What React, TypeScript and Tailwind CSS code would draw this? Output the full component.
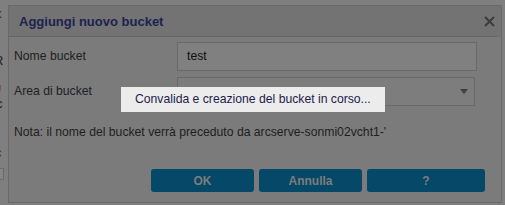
import React from 'react';

const font = { fontFamily: '"Liberation Sans", Arial, sans-serif' };

function CloseIcon() {
  return (
    <svg width="11" height="11" viewBox="0 0 11 11" className="block">
      <path d="M1 1 L10 10 M10 1 L1 10" stroke="#3c3c3c" strokeWidth="2" fill="none" />
    </svg>
  );
}

function Caret() {
  return (
    <svg width="8" height="5" viewBox="0 0 8 5" className="block">
      <path d="M0 0 H8 L4 5 Z" fill="#3f3f3f" />
    </svg>
  );
}

// partial glyphs of the page behind the overlay
function BehindStrip() {
  return (
    <div className="w-[8px] h-full overflow-hidden relative text-[13px] leading-none shrink-0">
      <div className="-ml-[5px] pt-[7px] text-[#1d2452]">x</div>
      <div className="-ml-[6px] mt-[34px] text-[#222]">R</div>
      <div className="-ml-[1px] mt-[17px] text-[9px] text-[#7a3040]">!</div>
      <div className="-ml-[4px] mt-[4px] text-[#222]">c</div>
      <div className="-ml-[4px] mt-[17px] text-[#222]">,</div>
      <div className="-ml-[5px] mt-[6px] text-[#5a2030]">c</div>
      <div className="-ml-[5px] mt-[9px] w-[9px] h-[12px] border border-[#6a6a6a] bg-[#858585]" />
    </div>
  );
}

export default function App() {
  return (
    <div className="w-[505px] h-[205px] bg-[#7f7f7f] flex overflow-hidden" style={font}>
      <BehindStrip />
      <div className="mt-[5px] w-[494px] h-[198px] border border-[#696969] bg-[#7b7b7b] relative flex flex-col">
        <div className="bg-[#737373]">
          <div className="h-[30px] flex items-center justify-between pl-[10px] pr-[6px]">
            <span className="text-[13px] leading-[16px] font-bold text-[#1c2350] pt-[1px]">
              Aggiungi nuovo bucket
            </span>
            <CloseIcon />
          </div>
          <div className="h-px bg-[#646464] mr-[4px]" />
        </div>

        <div className="px-[5px] pt-[5px] text-[12.2px] text-[#1e1e1e]">
          <div className="flex items-center h-[29px]">
            <span className="w-[163px]">Nome bucket</span>
            <div className="w-[300px] h-[29px] border border-[#686868] bg-[#808080] flex items-center pl-[9px] text-[#111]">
              test
            </div>
          </div>
          <div className="flex items-center h-[29px] mt-[6px]">
            <span className="w-[163px]">Area di bucket</span>
            <div className="w-[298px] h-[29px] border border-[#686868] bg-[#7d7d7d] flex items-center justify-end pr-[6px]">
              <Caret />
            </div>
          </div>
          <div className="mt-[19px] leading-[15px]">
            Nota: il nome del bucket verrà preceduto da arcserve-sonmi02vcht1-'
          </div>
        </div>

        <div className="mt-auto mb-[10px] flex justify-end gap-[5px] pr-[16px]">
          <button className="w-[103px] h-[23px] rounded-[3px] bg-[#054868] text-[#7d7d7d] text-[12px] font-bold">OK</button>
          <button className="w-[103px] h-[23px] rounded-[3px] bg-[#054868] text-[#7d7d7d] text-[12px] font-bold">Annulla</button>
          <button className="w-[118px] h-[23px] rounded-[3px] bg-[#054868] text-[#7d7d7d] text-[12px] font-bold">?</button>
        </div>

        <div className="absolute left-[112px] top-[81px] w-[264px] h-[25px] bg-[#ececec] flex items-center pl-[14px] text-[12.2px] text-[#22214a]">
          Convalida e creazione del bucket in corso...
        </div>
      </div>
    </div>
  );
}
